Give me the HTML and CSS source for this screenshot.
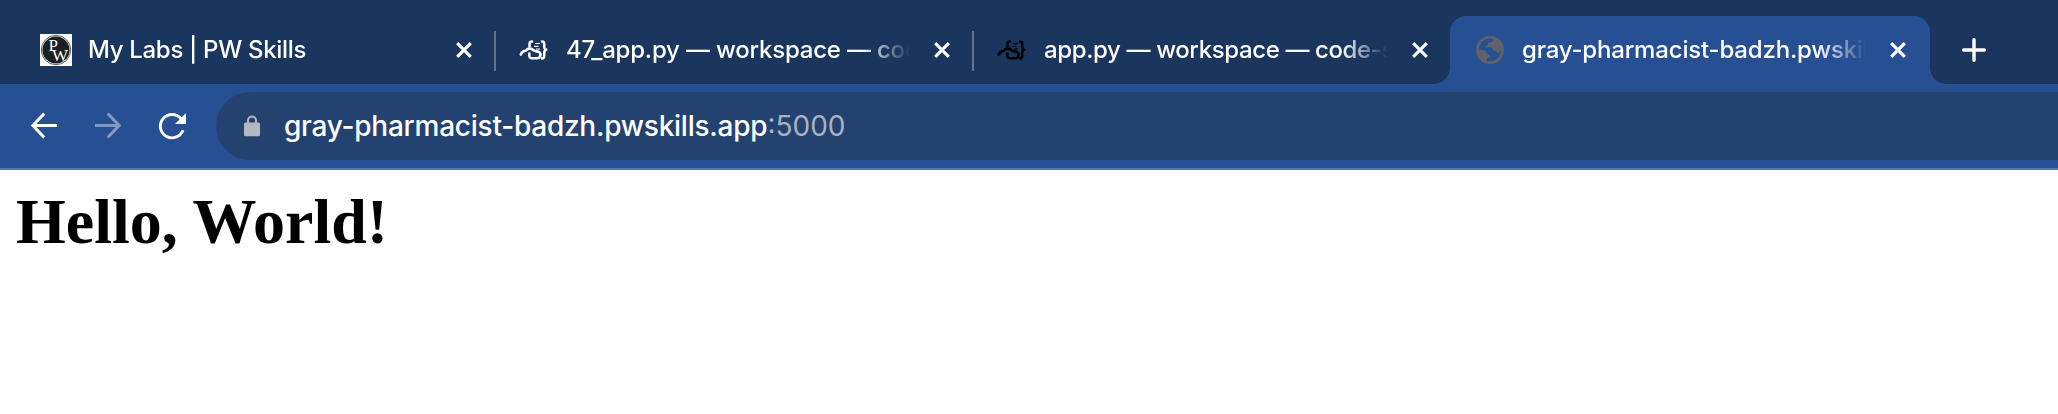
FILE: index.html
```html
<!DOCTYPE html>
<html lang="en">
<head>
<meta charset="utf-8">
<title>gray-pharmacist-badzh.pwskills.app:5000</title>
<link rel="stylesheet" href="styles.css">
</head>
<body>
<svg class="defs" width="0" height="0" aria-hidden="true">
  <symbol id="close" viewBox="0 0 16 16"><path d="M1.200 1.200 14.800 14.800M14.800 1.200 1.200 14.800" fill="none" stroke="#fff" stroke-width="3.100"/></symbol>
  <symbol id="code" viewBox="0 0 32 32">
    <g fill="none" stroke="currentColor" stroke-width="2.6" stroke-linecap="round" stroke-linejoin="round">
      <path d="M2.8 20.5C4 17.5 5.700 16.500 8 16.700C9.500 14.200 13 13.800 15.500 16.200C17 17.800 19 17 20.800 17.800C23.500 19.200 22.800 24 19.500 24.300H14.500C11.500 24.300 11 22.500 11.400 19.500"/>
      <path d="M14 7.500C11.500 7.300 11.500 8.500 11.500 12.500"/>
      <path d="M24 7.500C26.500 7.300 26.200 9.500 26.200 12C26.200 14.500 26.500 15.200 28.300 15.500C26.500 16 26.200 17 26.200 19.500C26.200 22.500 26.500 24.600 24 24.400"/>
    </g>
    <path d="M17 9.500H22M16 12.300H20.500M18 15H22" fill="none" stroke="currentColor" stroke-width="1.2"/>
  </symbol>
</svg>
<header class="browser">
  <div class="tabstrip">
    <div class="tab">
      <svg class="favicon" viewBox="0 0 32 32">
        <rect width="32" height="32" fill="#fff"/>
        <circle cx="16" cy="16" r="14.700" fill="none" stroke="#555b60" stroke-width="1"/>
        <circle cx="16" cy="16" r="13.600" fill="#1b2023"/>
        <text class="mono" x="8.500" y="16.500" font-size="17">P</text>
        <text class="mono" x="12" y="27" font-size="17">W</text>
      </svg>
      <span class="title t1">My Labs | PW Skills</span>
      <svg class="close"><use href="#close"/></svg>
    </div>
    <div class="tab divided">
      <svg class="favicon"><use href="#code"/></svg>
      <span class="title t2">47_app.py — workspace — code-server</span>
      <svg class="close"><use href="#close"/></svg>
    </div>
    <div class="tab divided">
      <svg class="favicon dark"><use href="#code"/></svg>
      <span class="title t3">app.py — workspace — code-server</span>
      <svg class="close"><use href="#close"/></svg>
    </div>
    <div class="tab active">
      <svg class="favicon" viewBox="0 0 32 32">
        <circle cx="16" cy="16" r="14" fill="#5f6368"/>
        <path d="M18.500 4.900C20 6 18.500 8.300 16 8.300C14 8.300 13.800 9.500 13.800 11C13.500 12 11 11.500 11 13.500H16.500C18.500 13.500 19 14.500 19 16.800C20.500 17 22.500 16.800 22.800 18.800C24.500 19 26 18 27 16C26.800 22.500 22 27.200 16 27.200C14.500 27.200 13.200 26.800 12.800 26.400V23.700H15C16.800 23.700 16.500 20.800 14.500 20.500C12.300 20.300 11.800 18.500 11.500 16.500L5 15.500C5.200 9.500 10 4.600 16 4.600Z" fill="#275094"/>
        <path d="M5 12.500C7 15 9.500 16 12 16.200V13.500H11C11 11.500 13.800 12 13.800 10.500C13.800 8.500 15 8.300 16 8.300C18 8.300 19.500 6.500 18.800 4.800" fill="none"/>
      </svg>
      <span class="title t4">gray-pharmacist-badzh.pwskills.app:5000</span>
      <svg class="close"><use href="#close"/></svg>
    </div>
    <svg class="plus" viewBox="0 0 24 24"><path d="M12 1.700V22.300M1.700 12H22.300" stroke="#fff" stroke-width="3.400" stroke-linecap="round"/></svg>
  </div>
  <div class="toolbar">
    <svg class="nav" viewBox="0 0 32 32"><path d="M29 15.500H6M16.300 3.500 4.800 15.500 16.300 27.500" fill="none" stroke="#fff" stroke-width="3"/></svg>
    <svg class="nav faded" viewBox="0 0 32 32"><path d="M3 15.500H27M15.700 3.500 27.200 15.500 15.700 27.500" fill="none" stroke="#fff" stroke-width="3"/></svg>
    <svg class="nav" viewBox="0 0 32 32"><path d="M27 20.300A11.700 11.700 0 1 1 25 8.600" fill="none" stroke="#fff" stroke-width="2.900"/><path d="M30 3V14H19Z" fill="#fff"/></svg>
    <div class="omnibox">
      <svg class="lock" viewBox="0 0 16 22"><path d="M4 9V5.500a4 4 0 0 1 8 0V9" fill="none" stroke="#b5b8bc" stroke-width="2"/><rect y="7.500" width="16" height="13.700" rx="1.500" fill="#b5b8bc"/></svg>
      <span class="host">gray-pharmacist-badzh.pwskills.app</span><span class="port">:5000</span>
    </div>
  </div>
</header>
<main class="page"><h1 class="heading">Hello, World!</h1></main>
</body>
</html>
```

FILE: styles.css
```css
* { box-sizing: border-box; }
body { margin: 0; background: #fff; overflow: hidden; font-family: Inter, Roboto, sans-serif; color: #fff; }
svg { display: block; flex: none; }
.defs { position: absolute; }
.browser { border-bottom: 2px solid #4f77b0; }
.tabstrip { display: flex; height: 84px; padding: 16px 0 0 16px; background: #1a355e; }
.tab { display: flex; align-items: center; flex: none; width: 478px; height: 68px; padding-left: 24px; }
.divided { background: linear-gradient(#5f7492, #5f7492) 0 15px / 2px 40px no-repeat; }
.active {
  position: relative;
  width: 480px;
  background: #275094;
  border-radius: 16px 16px 0 0;
}
.active::before, .active::after { content: ""; position: absolute; bottom: 0; width: 16px; height: 16px; }
.active::before { left: -16px; background: radial-gradient(circle at 0 0, #1a355e 15.500px, #275094 16px); }
.active::after { right: -16px; background: radial-gradient(circle at 100% 0, #1a355e 15.500px, #275094 16px); }
.favicon { width: 32px; height: 32px; color: #fff; }
.dark { color: #000; }
.mono { font-family: "Liberation Serif", serif; fill: #fff; }
.title {
  width: 344px;
  margin-left: 16px;
  overflow: hidden;
  white-space: nowrap;
  font-size: 24px;
  font-weight: 500;
  line-height: 32px;
  mask-image: linear-gradient(to right, #000 296px, transparent 344px);
}
.t1 { letter-spacing: -.32px; }
.t2 { letter-spacing: -.2px; }
.t3 { letter-spacing: -.38px; }
.t4 { letter-spacing: -.18px; }
.close { width: 16px; height: 16px; margin-left: 24px; }
.plus { width: 24px; height: 24px; margin: 22px 0 0 32px; }
.toolbar { display: flex; align-items: center; height: 84px; padding-left: 28px; background: #275094; }
.nav { width: 32px; height: 32px; margin-right: 32px; }
.faded { opacity: .42; }
.omnibox {
  display: flex;
  align-items: center;
  flex: 1;
  height: 68px;
  margin-left: -4px;
  padding-left: 28px;
  background: #24426f;
  border-radius: 34px 0 0 34px;
  font-size: 28px;
  line-height: 36px;
}
.lock { width: 16px; height: 22px; margin-right: 24px; }
.host { font-weight: 500; letter-spacing: -.24px; }
.port { color: #a7b3c5; }
.page { padding: 15px 16px; color: #000; }
.heading { margin: 0; font: bold 64px/73px "Liberation Serif", serif; }
```
